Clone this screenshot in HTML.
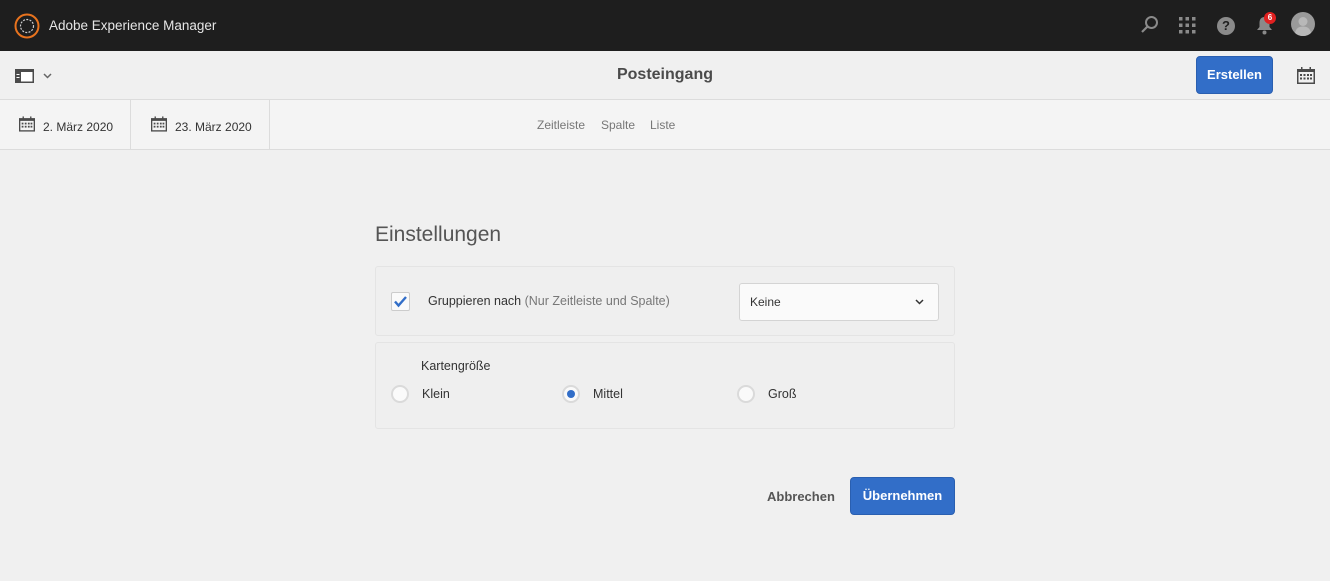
<!DOCTYPE html>
<html><head><meta charset="utf-8"><style>
*{box-sizing:border-box;margin:0;padding:0}
body{width:1330px;height:581px;background:#f0f0f0;font-family:"Liberation Sans",sans-serif;color:#4b4b4b;position:relative;overflow:hidden;font-size:13px}
.abs{position:absolute}
.top{left:0;top:0;width:1330px;height:51px;background:#1e1e1e}
.bar{left:0;top:51px;width:1330px;height:49px;background:#f0f0f0;border-bottom:1px solid #dcdcdc}
.dates{left:0;top:100px;width:1330px;height:50px;background:#f4f4f4;border-bottom:1px solid #dcdcdc}
.btn{background:#326ec8;color:#fff;font-weight:bold;border-radius:4px;border:1px solid #2a5fb0;text-align:center;font-size:13px}
.panel{background:#efefef;border:1px solid #e4e4e4;border-radius:3px}
.radio{width:18px;height:18px;border-radius:50%;border:2px solid #dadada;background:#fafafa}
</style></head><body>
<div class="abs top">
  <svg class="abs" style="left:14px;top:13px" width="26" height="26" viewBox="0 0 26 26"><circle cx="13" cy="13" r="11.5" fill="none" stroke="#e8731e" stroke-width="2"/><circle cx="13" cy="13" r="6.5" fill="none" stroke="#ccc" stroke-width="1.2" stroke-dasharray="2 1.3"/></svg>
  <div class="abs" style="left:49px;top:18px;color:#e6e6e6;font-size:13.5px">Adobe Experience Manager</div>
  <svg class="abs" style="left:1140px;top:15px" width="20" height="20" viewBox="0 0 20 20"><circle cx="11.5" cy="7.5" r="5.5" fill="none" stroke="#8a8a8a" stroke-width="2"/><line x1="7.5" y1="11.5" x2="2" y2="17" stroke="#8a8a8a" stroke-width="2.2"/></svg>
  <svg class="abs" style="left:1179px;top:17px" width="17" height="17" viewBox="0 0 17 17" fill="#8a8a8a"><rect x="0" y="0" width="3.5" height="3.5"/><rect x="6.5" y="0" width="3.5" height="3.5"/><rect x="13" y="0" width="3.5" height="3.5"/><rect x="0" y="6.5" width="3.5" height="3.5"/><rect x="6.5" y="6.5" width="3.5" height="3.5"/><rect x="13" y="6.5" width="3.5" height="3.5"/><rect x="0" y="13" width="3.5" height="3.5"/><rect x="6.5" y="13" width="3.5" height="3.5"/><rect x="13" y="13" width="3.5" height="3.5"/></svg>
  <div class="abs" style="left:1217px;top:17px;width:18px;height:18px;border-radius:50%;background:#8a8a8a;color:#1e1e1e;font-weight:bold;font-size:13px;text-align:center;line-height:18px">?</div>
  <svg class="abs" style="left:1256px;top:16px" width="17" height="19" viewBox="0 0 17 19" fill="#8a8a8a"><path d="M8.5 1C5 1 3.5 3.5 3.5 7v4L1 14h15l-2.5-3V7C13.5 3.5 12 1 8.5 1z"/><circle cx="8.5" cy="16.5" r="2"/></svg>
  <div class="abs" style="left:1264px;top:12px;width:12px;height:12px;border-radius:50%;background:#e02020;color:#fff;font-size:8px;font-weight:bold;text-align:center;line-height:12px">6</div>
  <svg class="abs" style="left:1291px;top:12px" width="24" height="24" viewBox="0 0 24 24"><circle cx="12" cy="12" r="12" fill="#9a9a9a"/><circle cx="12" cy="9.5" r="4.5" fill="#b8b8b8"/><path d="M4 21c1-5 4-6.5 8-6.5s7 1.5 8 6.5a12 12 0 0 1-16 0z" fill="#b8b8b8"/></svg>
</div>
<div class="abs bar">
  <svg class="abs" style="left:15px;top:18px" width="19" height="14" viewBox="0 0 19 14"><rect x="0.75" y="0.75" width="17.5" height="12.5" fill="#fff" stroke="#4b4b4b" stroke-width="1.5"/><rect x="0" y="0" width="19" height="3" fill="#4b4b4b"/><rect x="0" y="3" width="6" height="11" fill="#4b4b4b"/><rect x="1.5" y="5" width="3" height="1" fill="#fff"/><rect x="1.5" y="8" width="3" height="1" fill="#fff"/></svg>
  <svg class="abs" style="left:43px;top:22px" width="9" height="6" viewBox="0 0 9 6"><path d="M1 1l3.5 3.5L8 1" fill="none" stroke="#666" stroke-width="1.5"/></svg>
  <div class="abs" style="left:0;width:1330px;top:15px;text-align:center;font-size:16px;font-weight:bold;color:#4b4b4b">Posteingang</div>
  <div class="abs btn" style="left:1196px;top:5px;width:77px;height:38px;line-height:36px">Erstellen</div>
  <svg class="abs" style="left:1297px;top:16px" width="18" height="17" viewBox="0 0 18 17"><rect x="0.75" y="2.75" width="16.5" height="13.5" fill="none" stroke="#4b4b4b" stroke-width="1.5"/><rect x="0" y="2" width="18" height="3" fill="#4b4b4b"/><rect x="4" y="0" width="1.5" height="3" fill="#4b4b4b"/><rect x="12.5" y="0" width="1.5" height="3" fill="#4b4b4b"/><g fill="#4b4b4b"><rect x="3" y="7" width="2" height="2"/><rect x="6.5" y="7" width="2" height="2"/><rect x="10" y="7" width="2" height="2"/><rect x="13" y="7" width="2" height="2"/><rect x="3" y="10.5" width="2" height="2"/><rect x="6.5" y="10.5" width="2" height="2"/><rect x="10" y="10.5" width="2" height="2"/><rect x="13" y="10.5" width="2" height="2"/></g></svg>
</div>
<div class="abs dates">
  <div class="abs" style="left:130px;top:0;width:1px;height:49px;background:#dcdcdc"></div>
  <div class="abs" style="left:269px;top:0;width:1px;height:49px;background:#dcdcdc"></div>
  <svg class="abs" style="left:19px;top:16px" width="16" height="16" viewBox="0 0 18 17"><rect x="0.75" y="2.75" width="16.5" height="13.5" fill="none" stroke="#4b4b4b" stroke-width="1.5"/><rect x="0" y="2" width="18" height="3" fill="#4b4b4b"/><rect x="4" y="0" width="1.5" height="3" fill="#4b4b4b"/><rect x="12.5" y="0" width="1.5" height="3" fill="#4b4b4b"/><g fill="#4b4b4b"><rect x="3" y="7" width="2" height="2"/><rect x="6.5" y="7" width="2" height="2"/><rect x="10" y="7" width="2" height="2"/><rect x="13" y="7" width="2" height="2"/><rect x="3" y="10.5" width="2" height="2"/><rect x="6.5" y="10.5" width="2" height="2"/><rect x="10" y="10.5" width="2" height="2"/><rect x="13" y="10.5" width="2" height="2"/></g></svg>
  <div class="abs" style="left:43px;top:20px;font-size:12px;color:#333">2. März 2020</div>
  <svg class="abs" style="left:151px;top:16px" width="16" height="16" viewBox="0 0 18 17"><rect x="0.75" y="2.75" width="16.5" height="13.5" fill="none" stroke="#4b4b4b" stroke-width="1.5"/><rect x="0" y="2" width="18" height="3" fill="#4b4b4b"/><rect x="4" y="0" width="1.5" height="3" fill="#4b4b4b"/><rect x="12.5" y="0" width="1.5" height="3" fill="#4b4b4b"/><g fill="#4b4b4b"><rect x="3" y="7" width="2" height="2"/><rect x="6.5" y="7" width="2" height="2"/><rect x="10" y="7" width="2" height="2"/><rect x="13" y="7" width="2" height="2"/><rect x="3" y="10.5" width="2" height="2"/><rect x="6.5" y="10.5" width="2" height="2"/><rect x="10" y="10.5" width="2" height="2"/><rect x="13" y="10.5" width="2" height="2"/></g></svg>
  <div class="abs" style="left:175px;top:20px;font-size:12px;color:#333">23. März 2020</div>
  <div class="abs" style="left:537px;top:18px;font-size:12px;color:#777">Zeitleiste</div>
  <div class="abs" style="left:601px;top:18px;font-size:12px;color:#777">Spalte</div>
  <div class="abs" style="left:650px;top:18px;font-size:12px;color:#777">Liste</div>
</div>
<div class="abs" style="left:375px;top:223px;font-size:21px;color:#555">Einstellungen</div>
<div class="abs panel" style="left:375px;top:266px;width:580px;height:70px">
  <div class="abs" style="left:15px;top:25px;width:19px;height:19px;border:1px solid #ccc;background:#fafafa;border-radius:2px"></div>
  <svg class="abs" style="left:17px;top:28px" width="15" height="13" viewBox="0 0 15 13"><path d="M2 6.5l3.5 4L13 2" fill="none" stroke="#326ec8" stroke-width="2.4"/></svg>
  <div class="abs" style="left:52px;top:27px;font-size:12.5px;color:#333">Gruppieren nach <span style="color:#777">(Nur Zeitleiste und Spalte)</span></div>
  <div class="abs" style="left:363px;top:16px;width:200px;height:38px;border:1px solid #d4d4d4;border-radius:3px;background:#fafafa">
    <div class="abs" style="left:10px;top:11px;font-size:12px;color:#333">Keine</div>
    <svg class="abs" style="left:175px;top:15px" width="9" height="6" viewBox="0 0 9 6"><path d="M1 1l3.5 3.5L8 1" fill="none" stroke="#333" stroke-width="1.5"/></svg>
  </div>
</div>
<div class="abs panel" style="left:375px;top:342px;width:580px;height:87px">
  <div class="abs" style="left:45px;top:16px;font-size:12.5px;color:#333">Kartengröße</div>
  <div class="abs radio" style="left:15px;top:42px"></div>
  <div class="abs" style="left:46px;top:44px;color:#333;font-size:12.5px">Klein</div>
  <div class="abs radio" style="left:186px;top:42px"><div style="width:8px;height:8px;border-radius:50%;background:#326ec8;margin:3px"></div></div>
  <div class="abs" style="left:217px;top:44px;color:#333;font-size:12.5px">Mittel</div>
  <div class="abs radio" style="left:361px;top:42px"></div>
  <div class="abs" style="left:392px;top:44px;color:#333;font-size:12.5px">Groß</div>
</div>
<div class="abs" style="left:767px;top:489px;font-size:13px;font-weight:bold;color:#555">Abbrechen</div>
<div class="abs btn" style="left:850px;top:477px;width:105px;height:38px;line-height:36px">Übernehmen</div>
</body></html>
